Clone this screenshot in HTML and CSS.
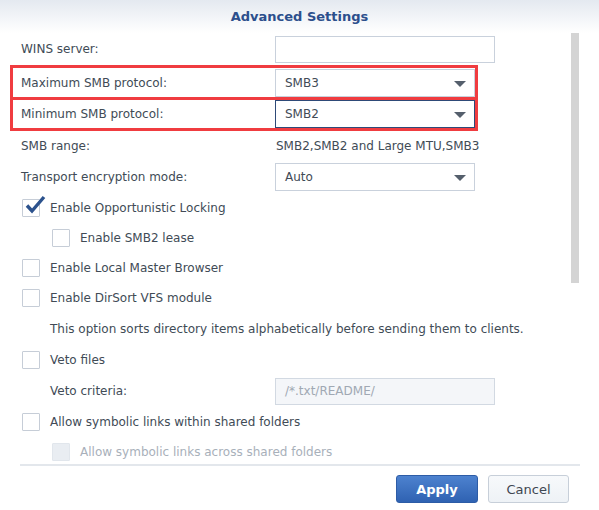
FILE: index.html
```html
<!DOCTYPE html>
<html>
<head>
<meta charset="utf-8">
<link rel="stylesheet" href="styles.css">
</head>
<body>
<div class="dialog">
  <div class="header">Advanced Settings</div>
  <div class="scroll-thumb"></div>
  <div class="content">
    <div class="row row-wins">
      <div class="label">WINS server:</div>
      <div class="field"><div class="textbox"></div></div>
    </div>
    <div class="hl">
      <div class="row row-hl">
        <div class="label">Maximum SMB protocol:</div>
        <div class="field"><div class="select"><span>SMB3</span><i class="arrow"></i></div></div>
      </div>
    </div>
    <div class="hl hl-second">
      <div class="row row-hl2">
        <div class="label">Minimum SMB protocol:</div>
        <div class="field"><div class="select focused"><span>SMB2</span><i class="arrow"></i></div></div>
      </div>
    </div>
    <div class="row row-range">
      <div class="label">SMB range:</div>
      <div class="field"><span class="value">SMB2,SMB2 and Large MTU,SMB3</span></div>
    </div>
    <div class="row row-transport">
      <div class="label">Transport encryption mode:</div>
      <div class="field"><div class="select"><span>Auto</span><i class="arrow"></i></div></div>
    </div>
    <div class="check-row">
      <span class="cb checked"><svg class="tick" viewBox="0 0 22 20" width="22" height="20"><path d="M3 10.5 L8 16 L20 2" fill="none" stroke="#2c528d" stroke-width="3.4"/></svg></span>
      <span>Enable Opportunistic Locking</span>
    </div>
    <div class="check-row indent">
      <span class="cb"></span>
      <span>Enable SMB2 lease</span>
    </div>
    <div class="check-row">
      <span class="cb"></span>
      <span>Enable Local Master Browser</span>
    </div>
    <div class="check-row">
      <span class="cb"></span>
      <span>Enable DirSort VFS module</span>
    </div>
    <div class="desc-row">This option sorts directory items alphabetically before sending them to clients.</div>
    <div class="check-row">
      <span class="cb"></span>
      <span>Veto files</span>
    </div>
    <div class="row sub-row">
      <div class="label sub-label">Veto criteria:</div>
      <div class="field"><div class="textbox disabled">/*.txt/README/</div></div>
    </div>
    <div class="check-row">
      <span class="cb"></span>
      <span>Allow symbolic links within shared folders</span>
    </div>
    <div class="check-row indent disabled-row">
      <span class="cb cb-disabled"></span>
      <span>Allow symbolic links across shared folders</span>
    </div>
  </div>
  <div class="footer">
    <button class="btn btn-primary">Apply</button>
    <button class="btn btn-default">Cancel</button>
  </div>
</div>
</body>
</html>
```
FILE: styles.css
```css
* { box-sizing: border-box; }
html, body { margin: 0; padding: 0; }
body {
  width: 599px;
  height: 510px;
  overflow: hidden;
  background: #fff;
  font-family: "DejaVu Sans", sans-serif;
  font-size: 12px;
  color: #414b56;
}
.dialog {
  position: relative;
  width: 599px;
  height: 510px;
}
.header {
  height: 33px;
  line-height: 33px;
  text-align: center;
  font-weight: bold;
  font-size: 13px;
  color: #2c4f8c;
  background: linear-gradient(#e4e9f0, #ffffff);
}
.scroll-thumb {
  position: absolute;
  left: 571px;
  top: 33px;
  width: 8px;
  height: 250px;
  background: #d4d4d4;
}
.content {
  padding-left: 21px;
  height: 431px;
  overflow: hidden;
}
.row {
  display: flex;
  align-items: center;
  height: 32px;
}
.row-wins { height: 32px; }
.row-hl { height: 29px; }
.row-hl2 { height: 28px; }
.row-range { height: 30px; }
.row-transport { height: 32px; }
.label {
  width: 254px;
  flex: none;
}
.field { flex: none; }
.textbox {
  width: 220px;
  height: 27px;
  border: 1px solid #c9d1dc;
  background: #fff;
  padding-left: 9px;
  line-height: 25px;
}
.textbox.disabled {
  background: #f4f6f9;
  border-color: #d2d9e2;
  color: #a0a8b3;
}
.hl {
  border: 3px solid #f03c40;
  margin-left: -11px;
  width: 468px;
  padding-left: 8px;
}
.hl-second { margin-top: -3px; }
.select {
  position: relative;
  width: 200px;
  height: 28px;
  border: 1px solid #c9d1dc;
  background: #fff;
  padding-left: 9px;
  line-height: 26px;
}
.select.focused { border-color: #2e4a78; }
.arrow {
  position: absolute;
  right: 8px;
  top: 11px;
  width: 0;
  height: 0;
  border-left: 6px solid transparent;
  border-right: 6px solid transparent;
  border-top: 6px solid #555f6c;
}
.value { padding-left: 1px; }
.check-row {
  display: flex;
  align-items: center;
  height: 30px;
  padding-left: 1px;
}
.check-row.indent { padding-left: 31px; }
.cb {
  position: relative;
  flex: none;
  width: 18px;
  height: 18px;
  border: 1px solid #c6cdd7;
  border-radius: 1px;
  background: #fff;
  margin-right: 10px;
}
.tick {
  position: absolute;
  left: 1px;
  top: -5px;
}
.cb-disabled {
  background: #e9edf2;
  border-color: #e1e6ec;
}
.disabled-row { color: #a8b0ba; }
.desc-row {
  height: 32px;
  line-height: 32px;
  padding-left: 29px;
}
.sub-row { height: 32px; }
.sub-label { padding-left: 29px; }
.footer {
  margin: 0 19px 0 20px;
  border-top: 2px solid #e3e7ec;
  height: 46px;
  display: flex;
  justify-content: flex-end;
  align-items: center;
  gap: 10px;
  padding-right: 11px;
  padding-top: 2px;
}
.btn {
  height: 28px;
  border-radius: 3px;
  font-family: inherit;
  font-size: 13px;
  padding: 0;
}
.btn-primary {
  width: 82px;
  background: linear-gradient(#4d82cf, #2f62b2);
  border: 1px solid #2d5ca6;
  color: #fff;
  font-weight: bold;
}
.btn-default {
  width: 81px;
  background: linear-gradient(#f7f9fb, #eef2f6);
  border: 1px solid #c7cfd9;
  color: #3e4752;
}
```
